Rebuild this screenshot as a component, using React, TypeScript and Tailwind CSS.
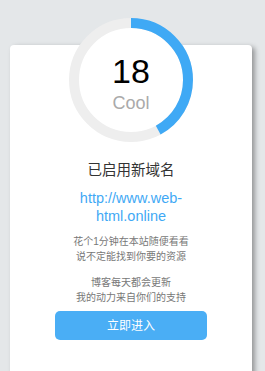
export default function App() {
  const r = 57;
  const c = 2 * Math.PI * r;
  const pct = 0.42;
  return (
    <div className="min-h-screen overflow-hidden bg-[#e4e7e9] pt-[45px] pl-[10px] pr-[13px] font-['Liberation_Sans','Noto_Sans_CJK_SC',sans-serif]">
      <div className="flex h-[340px] flex-col items-center rounded-[4px] bg-white shadow-[3px_2px_5px_rgba(0,0,0,0.35)]">
        <div className="relative -mt-[27px] h-[124px] w-[124px]">
          <svg className="absolute inset-0 -rotate-90" width="124" height="124" viewBox="0 0 124 124">
            <circle cx="62" cy="62" r={r} fill="white" stroke="#eeeeee" strokeWidth="10" />
            <circle
              cx="62"
              cy="62"
              r={r}
              fill="none"
              stroke="#3fa9f5"
              strokeWidth="10"
              strokeDasharray={`${c * pct} ${c}`}
            />
          </svg>
          <div className="relative flex flex-col items-center pt-[36px]">
            <div className="text-[34px] leading-[34px] text-black">18</div>
            <div className="mt-[6px] text-[18px] leading-[18px] text-[#aaaaaa]">Cool</div>
          </div>
        </div>
        <div className="mt-[18px] text-[14.5px] leading-[20px] text-[#333333]">已启用新域名</div>
        <div className="mt-[9px] max-w-[150px] text-center text-[14.5px] leading-[18px] text-[#3fa9f5]">
          http://www.web-html.online
        </div>
        <div className="mt-[9px] text-center text-[10px] leading-[15px] text-[#777777]">
          花个1分钟在本站随便看看
          <br />
          说不定能找到你要的资源
        </div>
        <div className="mt-[11px] text-center text-[10px] leading-[15px] text-[#777777]">
          博客每天都会更新
          <br />
          我的动力来自你们的支持
        </div>
        <button className="mt-[6px] flex h-[29px] w-[152px] items-center justify-center rounded-[5px] bg-[#4aaef5] text-[12px] text-white">
          立即进入
        </button>
      </div>
    </div>
  );
}
